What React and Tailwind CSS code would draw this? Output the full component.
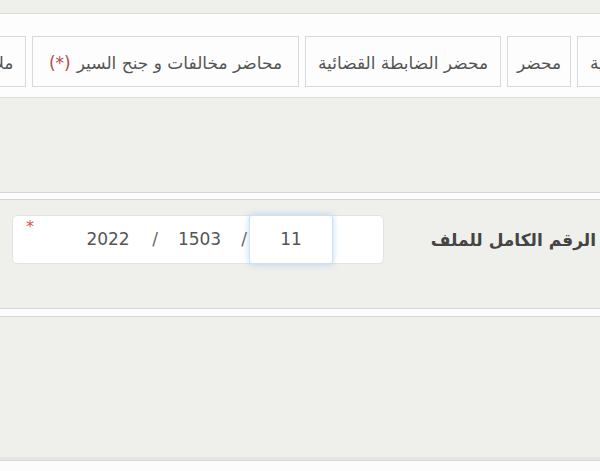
import React from 'react';

const tabs = [
  { label: 'القضية', w: 'w-[80px]', align: 'justify-end pl-[12px]' },
  { label: 'محضر', w: 'w-[64px]', align: 'justify-center' },
  { label: 'محضر الضابطة القضائية', w: 'w-[196px]', align: 'justify-center' },
  { label: 'محاضر مخالفات و جنح السير', w: 'w-[267px]', align: 'justify-center', required: true },
  { label: 'ملاحظات', w: 'w-[90px]', align: 'justify-center' },
];

export default function App() {
  return (
    <div
      dir="rtl"
      className="h-[471px] w-full overflow-hidden bg-[#efefeb] flex flex-col font-['DejaVu_Sans',sans-serif] text-[#555]"
    >
      <div className="h-[13px] shrink-0" />

      {/* Tabs panel */}
      <div className="h-[85px] shrink-0 border-y border-[#dcdcd8] bg-[#fdfdfd] pt-[22px] overflow-hidden">
        <div className="flex gap-[6px] mr-[-57px]">
          {tabs.map((t) => (
            <div
              key={t.label}
              className={`${t.w} ${t.align} shrink-0 h-[51px] border border-[#d9d9d9] bg-[#fdfdfd] flex items-center pt-[4px] whitespace-nowrap overflow-hidden text-[17px] text-[#555]`}
            >
              <span>{t.label}</span>
              {t.required && <span className="text-[#b94a48] mr-[6px]">(*)</span>}
            </div>
          ))}
        </div>
      </div>

      <div className="h-[94px] shrink-0" />

      {/* Field group */}
      <div className="h-[8px] shrink-0 border-y border-[#d6d6d2] bg-[#fcfcfc]" />
      <div className="h-[108px] shrink-0 pt-[15px]">
        <div className="flex h-[49px]">
          <div className="w-[216px] shrink-0 flex items-center pr-[4px] pt-[3px]">
            <span className="text-[17px] font-bold text-[#444]">الرقم الكامل للملف</span>
          </div>
          <div className="w-[372px] shrink-0 bg-white border border-[#e3e3e3] rounded-[5px] flex">
            <div className="w-[50px] shrink-0" />
            <div className="w-[84px] shrink-0 -my-px border border-[#cfe0f2] rounded-[3px] shadow-[0_0_6px_rgba(102,175,233,0.45)] bg-white flex items-center justify-center text-[17px] text-[#555]">
              11
            </div>
            <div className="w-[10px] shrink-0 flex items-center justify-center text-[17px] text-[#666]">/</div>
            <div className="w-[79px] shrink-0 flex items-center justify-center text-[17px] text-[#555]">1503</div>
            <div className="w-[10px] shrink-0 flex items-center justify-center text-[17px] text-[#666]">/</div>
            <div className="w-[84px] shrink-0 flex items-center justify-center text-[17px] text-[#555]">2022</div>
            <div className="flex-1 text-left pl-[13px] pt-[3px] text-[16px] leading-none text-[#d9534f]">*</div>
          </div>
        </div>
      </div>
      <div className="h-[9px] shrink-0 border-y border-[#d6d6d2] bg-[#fcfcfc]" />

      <div className="h-[140px] shrink-0" />

      <div className="h-[4px] shrink-0 bg-[#e6e6e3] border-b border-[#d8d8d5]" />
      <div className="flex-1 bg-[#fcfcfc]" />
    </div>
  );
}
